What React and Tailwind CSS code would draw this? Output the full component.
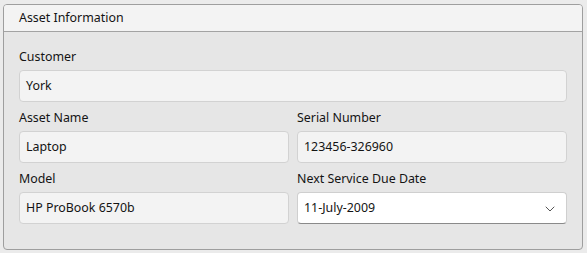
import { ChevronDown } from 'lucide-react'

const Field = ({ label, value }) => (
  <div className="flex flex-col">
    <label className="h-5 leading-[22px] mb-1">{label}</label>
    <div className="h-8 pl-[6px] pr-2 pt-px flex items-center rounded border border-[#d2d2d2] bg-[#f3f3f3]">{value}</div>
  </div>
)

const App = () => {
  return (
    <div
      className="w-[587px] h-[253px] bg-[#ebebeb] pt-1 pl-[3px] text-[12.4px] text-[#141414]"
      style={{ fontFamily: '"Noto Sans", "Open Sans", sans-serif' }}
    >
      <div className="w-[580px] h-[246px] rounded border border-[#9e9e9e] bg-[#e6e6e6] overflow-hidden">
        <div className="h-[27px] px-[15px] pt-px flex items-center bg-[#f3f3f3] border-b border-[#a3a3a3]">
          Asset Information
        </div>
        <div className="px-[15px] pt-[14px] flex flex-col gap-[5px]">
          <Field label="Customer" value="York" />
          <div className="grid grid-cols-2 gap-x-2">
            <Field label="Asset Name" value="Laptop" />
            <Field label="Serial Number" value="123456-326960" />
          </div>
          <div className="grid grid-cols-2 gap-x-2">
            <Field label="Model" value="HP ProBook 6570b" />
            <div className="flex flex-col">
              <label className="h-5 leading-[22px] mb-1">Next Service Due Date</label>
              <div className="h-8 pl-[6px] pr-2 pt-px flex items-center justify-between rounded border border-[#cfcfcf] border-b-[#8a8a8a] bg-white">
                <span>11-July-2009</span>
                <ChevronDown size={16} strokeWidth={1.25} className="text-[#333]" />
              </div>
            </div>
          </div>
        </div>
      </div>
    </div>
  )
}

export default App
